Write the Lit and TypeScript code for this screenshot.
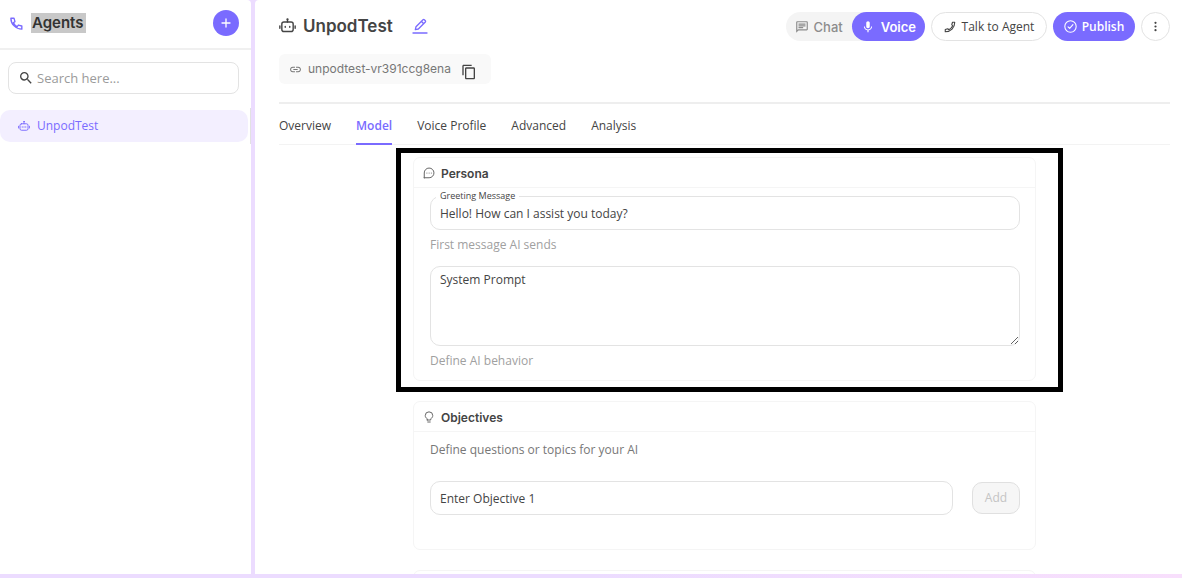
import { LitElement, html, css, svg } from "lit";
import { customElement, state } from "lit/decorators.js";

const stroke = (size: number, body: unknown, width = 2) => html`<svg
  width=${size} height=${size} viewBox="0 0 24 24" fill="none" stroke="currentColor"
  stroke-width=${width} stroke-linecap="round" stroke-linejoin="round" aria-hidden="true">${body}</svg>`;

const solid = (size: number, body: unknown) => html`<svg
  width=${size} height=${size} viewBox="0 0 24 24" fill="currentColor" aria-hidden="true">${body}</svg>`;

const phone = (size: number) => stroke(size, svg`<path d="M3 3.500h5l1.500 5.500-2.500 1.800c1.300 2.800 3.400 4.900 6.200 6.200l1.800-2.500 5.500 1.500v5C11 21 3 13 3 3.500Z"/>`, 2.2);
const phoneFlipped = (size: number) => stroke(size, svg`<path d="M17 2.500h4.500C21.500 13.500 13.500 21.500 2.500 21.500V17l5-1.500 2.200 2c3.300-1.600 6.200-4.500 7.800-7.800l-2-2.200Z"/>`, 2.2);
const plus = (size: number) => stroke(size, svg`<path d="M12 4v16M4 12h16"/>`, 2.6);
const search = (size: number) => solid(size, svg`<path d="M15.500 14h-.79l-.28-.27A6.470 6.470 0 0 0 16 9.500 6.500 6.500 0 1 0 9.500 16c1.610 0 3.090-.59 4.230-1.570l.27.28v.79l5 4.990L20.490 19l-4.990-5zm-6 0C7.010 14 5 11.990 5 9.500S7.010 5 9.500 5 14 7.010 14 9.500 11.990 14 9.500 14z"/>`);
const robot = (size: number) => stroke(size, svg`<rect x="4" y="7.500" width="16" height="13" rx="3"/><path d="M12 7.500V3.500M1.200 12.500v3.500M22.800 12.500v3.500M8.500 13.500v1M12 13.500v1M15.500 13.500v1"/><circle cx="12" cy="3.200" r=".6"/>`, 1.9);
const robotLarge = (size: number) => stroke(size, svg`<rect x="4" y="7" width="16" height="13.500" rx="3"/><path d="M12 7V3.500M1.200 12.500v3.500M22.800 12.500v3.500M8.800 13.500v1M15.200 13.500v1"/><circle cx="12" cy="3.200" r=".6"/>`, 2);
const pencil = (size: number) => stroke(size, svg`<path d="M5 17.500l1-4.500L16.500 2.500a1.500 1.500 0 0 1 2 0l1.500 1.500a1.500 1.500 0 0 1 0 2L9.500 16.500 5 17.500ZM14 5l3.500 3.500M1.500 22.500h21"/>`, 2);
const link = (size: number) => solid(size, svg`<path d="M3.900 12c0-1.710 1.390-3.100 3.100-3.100h4V7H7c-2.760 0-5 2.240-5 5s2.240 5 5 5h4v-1.900H7c-1.710 0-3.100-1.390-3.100-3.100zM8 13h8v-2H8v2zm9-6h-4v1.900h4c1.710 0 3.100 1.390 3.100 3.100s-1.390 3.100-3.100 3.100h-4V17h4c2.760 0 5-2.240 5-5s-2.240-5-5-5z"/>`);
const copy = (size: number) => solid(size, svg`<path d="M16 1H4c-1.100 0-2 .9-2 2v14h2V3h12V1zm3 4H8c-1.100 0-2 .9-2 2v14c0 1.100.9 2 2 2h11c1.100 0 2-.9 2-2V7c0-1.100-.9-2-2-2zm0 16H8V7h11v14z"/>`);
const chat = (size: number) => solid(size, svg`<path d="M4 4h16v12H5.170L4 17.170V4m0-2c-1.100 0-1.990.9-1.990 2L2 22l4-4h14c1.100 0 2-.9 2-2V4c0-1.100-.9-2-2-2H4zm2 10h8v2H6v-2zm0-3h12v2H6V9zm0-3h12v2H6V6z"/>`);
const mic = (size: number) => solid(size, svg`<path d="M12 14c1.660 0 2.990-1.340 2.990-3L15 5c0-1.660-1.340-3-3-3S9 3.340 9 5v6c0 1.660 1.340 3 3 3zm5.300-3c0 3-2.540 5.100-5.300 5.100S6.700 14 6.700 11H5c0 3.410 2.720 6.230 6 6.720V21h2v-3.280c3.280-.48 6-3.300 6-6.720h-1.700z"/>`);
const checkCircle = (size: number) => stroke(size, svg`<circle cx="12" cy="12" r="10.500"/><path d="M7.500 12.500l3 3 6-7"/>`, 2);
const dots = (size: number) => solid(size, svg`<circle cx="12" cy="4" r="2.400"/><circle cx="12" cy="12" r="2.400"/><circle cx="12" cy="20" r="2.400"/>`);
const bubble = (size: number) => stroke(size, svg`<path d="M2.500 21.500V12a9.700 9.700 0 1 1 9.700 9.500H2.500Z"/><path d="M7.800 12.200h.1M12.200 12.200h.1M16.600 12.200h.1"/>`, 2);
const bulb = (size: number) => stroke(size, svg`<path d="M8.500 18v-2.500C6 14 4.500 12 4.500 9.200a7.500 7.500 0 0 1 15 0c0 2.800-1.500 4.800-4 6.300V18h-7ZM9.500 22h5"/>`, 2);

@customElement("app-root")
export class AppRoot extends LitElement {
  @state() private tab = "Model";

  private tabs = ["Overview", "Model", "Voice Profile", "Advanced", "Analysis"];

  static styles = css`
    :host {
      --accent: #7a6bff;
      --text: #444;
      --line: #e3e3e3;
      --soft: #f4f4f4;
      --display: Inter, "Open Sans", sans-serif;
      display: grid;
      grid-template-columns: 251px minmax(0, 1fr);
      column-gap: 4px;
      height: 100vh;
      padding-bottom: 4px;
      box-sizing: border-box;
      background: linear-gradient(90deg, #ecdcff 50%, #f8dffc);
      color: var(--text);
      font: 12px/16px "Open Sans", Inter, sans-serif;
    }
    * { box-sizing: border-box; }
    svg { display: block; flex: none; }
    button, input, textarea { font: inherit; color: inherit; }
    button { cursor: pointer; }
    h1, h2, p { margin: 0; }
    h1, h2 { font-family: var(--display); }

    .sidebar { background: #fff; border-top-right-radius: 4px; min-width: 0; }
    .brand {
      display: flex; align-items: center; gap: 7px; height: 50px;
      padding: 0 12px 2px 9px; border-bottom: 2px solid #f0f0f0;
    }
    .brand svg { color: var(--accent); }
    .brand h2 { font-size: 15px; line-height: 20px; font-weight: 600; color: #333; background: #c8c8c8; padding: 0 2px 0 1px; }
    .add-agent {
      display: grid; place-items: center; width: 26px; height: 26px; margin-left: auto;
      padding: 0; border: 0; border-radius: 50%; background: var(--accent);
    }
    .brand .add-agent svg { color: #fff; }
    .search {
      display: flex; align-items: center; gap: 3px; height: 32px; margin: 12px 12px 16px 8px;
      padding: 0 9px; border: 1px solid var(--line); border-radius: 8px;
    }
    .search input { flex: 1; min-width: 0; border: 0; outline: 0; padding: 0; background: none; font-size: 13px; }
    .search input::placeholder { color: #9b9b9b; }
    .agents { display: flex; height: 32px; }
    .agents::after { content: ""; width: 1px; height: 36px; margin-top: -2px; background: #e2e2e2; }
    .agent {
      display: flex; flex: 1; align-items: center; gap: 7px; margin-right: 2px; padding-left: 18px;
      border-radius: 10px; background: #f3efff; color: var(--accent); text-decoration: none;
    }

    .main { display: flex; flex-direction: column; min-width: 0; min-height: 0; padding: 12px 12px 0 24px; background: #fff; border-top-left-radius: 4px; }
    .head { display: flex; align-items: center; height: 29px; }
    .title { display: flex; align-items: center; padding-bottom: 2px; }
    .title h1 { margin: 0 19px 0 7px; font-size: 17px; line-height: 24px; font-weight: 600; }
    .icon-btn { display: grid; place-items: center; padding: 0; border: 0; background: none; }
    .edit { color: var(--accent); }
    .actions { display: flex; align-items: center; gap: 6px; margin-left: auto; height: 29px; }
    .actions button { display: flex; align-items: center; justify-content: center; height: 29px; border: 0; border-radius: 15px; white-space: nowrap; }
    .modes { display: flex; border-radius: 15px; background: var(--soft); font: 500 13px/16px var(--display); }
    .modes button { gap: 5px; padding: 0 9px; background: none; color: #8c8c8c; }
    .modes .on { gap: 6px; background: var(--accent); color: #fff; font-weight: 600; }
    .actions .outline { gap: 6px; width: 116px; padding: 0; border: 1px solid var(--line); background: #fff; font-weight: 500; }
    .actions .primary { gap: 5px; width: 82px; padding: 0; background: var(--accent); color: #fff; font-weight: 600; }
    .actions .more { width: 29px; padding: 0; border: 1px solid var(--line); background: #fff; }
    .slug {
      display: flex; align-items: center; align-self: flex-start; gap: 6px; width: 212px; height: 30px; margin: 13px 0 18px;
      padding: 0 14px 0 10px; border-radius: 6px; background: #f9f9f9; color: #777; font-family: var(--display);
    }
    .slug .icon-btn { margin: 5px 0 0 auto; color: #444; }
    .tabs { display: flex; gap: 25px; height: 43px; border-top: 2px solid #eee; border-bottom: 1px solid #f3f3f3; }
    .tabs button { height: 41px; padding: 5px 0 0; border: 0; border-bottom: 2px solid transparent; background: none; }
    .tabs .on { color: var(--accent); border-color: var(--accent); font-weight: 600; }

    .content { flex: 1; min-height: 0; overflow: hidden; padding-top: 12px; }
    .stack { display: flex; flex-direction: column; gap: 20px; max-width: 623px; margin: 0 auto; }
    .card { position: relative; border: 1px solid #f5f5f5; border-radius: 7px; }
    .card-head { display: flex; align-items: center; gap: 6px; height: 30px; padding: 3px 9px 0; border-bottom: 1px solid #f5f5f5; }
    .card-head h2 { font-size: 12px; line-height: 16px; font-weight: 600; }
    .card-head svg { color: #666; margin-top: -2px; }
    .card-body { padding: 8px 15px 11px 16px; }
    .highlight { position: absolute; inset: -10px -28px -12px -18px; border: 5px solid #000; pointer-events: none; }
    .field { position: relative; }
    .field label { position: absolute; left: 6px; top: -7px; padding: 0 4px; background: #fff; font-size: 9px; line-height: 14px; }
    .box { display: block; width: 100%; height: 34px; padding: 0 9px; border: 1px solid var(--line); border-radius: 10px; background: #fff; outline: 0; }
    textarea.box { height: 80px; padding: 5px 9px; margin-top: 13px; }
    .box::placeholder { color: #444; opacity: 1; }
    .hint { margin-top: 7px; color: #a0a0a0; }
    .lead { margin: 2px 0 23px; color: #777; }
    .row { display: flex; align-items: center; gap: 19px; padding-bottom: 23px; }
    .row .box { flex: 1; min-width: 0; }
    .add { width: 48px; height: 32px; padding: 0; border: 1px solid #e0e0e0; border-radius: 10px; background: #f6f6f6; color: #c4c4c4; }
  `;

  render() {
    return html`
      <aside class="sidebar">
        <div class="brand">
          ${phone(15)}
          <h2>Agents</h2>
          <button class="add-agent" aria-label="Add agent">${plus(12)}</button>
        </div>
        <label class="search">
          ${search(16)}
          <input type="search" placeholder="Search here..." aria-label="Search agents" />
        </label>
        <nav class="agents">
          <a class="agent" href="#unpodtest">${robot(12)}<span>UnpodTest</span></a>
        </nav>
      </aside>
      <main class="main">
        <header class="head">
          <div class="title">
            ${robotLarge(17)}
            <h1>UnpodTest</h1>
            <button class="icon-btn edit" aria-label="Rename">${pencil(16)}</button>
          </div>
          <div class="actions">
            <div class="modes">
              <button>${chat(14)}Chat</button>
              <button class="on">${mic(14)}Voice</button>
            </div>
            <button class="outline">${phoneFlipped(12)}Talk to Agent</button>
            <button class="primary">${checkCircle(13)}Publish</button>
            <button class="more" aria-label="More">${dots(11)}</button>
          </div>
        </header>
        <div class="slug">
          ${link(13)}
          <span>unpodtest-vr391ccg8ena</span>
          <button class="icon-btn" aria-label="Copy">${copy(16)}</button>
        </div>
        <nav class="tabs" role="tablist">
          ${this.tabs.map(
            (name) => html`<button role="tab" aria-selected=${name === this.tab}
              class=${name === this.tab ? "on" : ""} @click=${() => (this.tab = name)}>${name}</button>`
          )}
        </nav>
        <div class="content">
          <div class="stack">
            <section class="card">
              <div class="card-head">${bubble(12)}<h2>Persona</h2></div>
              <div class="card-body">
                <div class="field">
                  <label for="greeting">Greeting Message</label>
                  <input id="greeting" class="box" .value=${"Hello! How can I assist you today?"} />
                </div>
                <p class="hint">First message AI sends</p>
                <textarea class="box" placeholder="System Prompt" aria-label="System Prompt"></textarea>
                <p class="hint">Define AI behavior</p>
              </div>
              <div class="highlight"></div>
            </section>
            <section class="card">
              <div class="card-head">${bulb(12)}<h2>Objectives</h2></div>
              <div class="card-body">
                <p class="lead">Define questions or topics for your AI</p>
                <div class="row">
                  <input class="box" placeholder="Enter Objective 1" aria-label="Objective 1" />
                  <button class="add" disabled>Add</button>
                </div>
              </div>
            </section>
            <section class="card"><div class="card-head"></div></section>
          </div>
        </div>
      </main>
    `;
  }
}
